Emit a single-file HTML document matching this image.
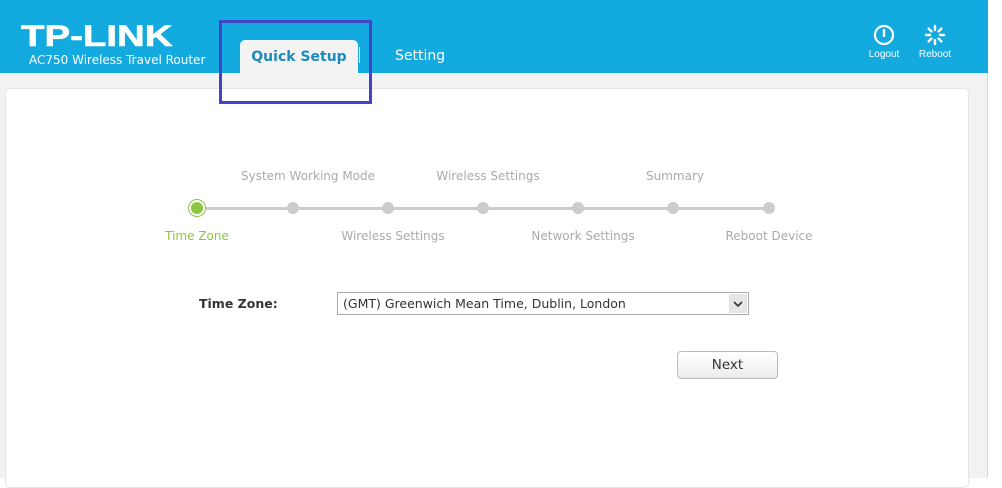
<!DOCTYPE html><html><head><style>
*{margin:0;padding:0;box-sizing:border-box}
body{width:1002px;height:478px;overflow:hidden;background:#fff;font-family:"DejaVu Sans",Verdana,sans-serif;position:relative}
.bg{position:absolute;left:0;top:0;width:988px;height:478px;background:#f2f2f2;border-right:1px solid #d8d8d8}
.hdr{position:absolute;left:0;top:0;width:988px;height:73px;background:#12aadf}
.logo{position:absolute;left:21px;top:21px;color:#fff;font-family:"Liberation Sans",Arial,sans-serif;font-weight:900;font-size:30px;transform:scaleX(1.28);transform-origin:left;line-height:32px;-webkit-text-stroke:0.6px #fff}
.sub{position:absolute;left:29px;top:53px;color:#fff;font-size:12px}
.tab{position:absolute;left:240px;top:40px;width:118px;height:33px;background:#f3f3f3;border-radius:5px 5px 0 0;color:#1a8bc0;font-weight:bold;font-size:14px;text-align:center;line-height:34px}
.sep{position:absolute;left:359px;top:47px;width:1px;height:16px;background:#fff}
.set{position:absolute;left:395px;top:48px;color:#fff;font-size:14px}
.hl{position:absolute;left:219px;top:20px;width:153px;height:84px;border:3px solid #4343c8}
.ic{position:absolute;color:#fff;font-family:"Liberation Sans",Arial,sans-serif;font-size:10px;text-align:center}
.panel{position:absolute;left:5px;top:88px;width:964px;height:400px;background:#fff;border-radius:5px;border:1px solid #e6e6e6}
.lbl{position:absolute;font-size:12px;color:#aaa;white-space:nowrap;transform:translateX(-50%)}
.line{position:absolute;left:197px;top:207px;width:572px;height:3px;background:#ccc}
.dot{position:absolute;top:202px;width:12px;height:12px;margin-left:-6px;border-radius:50%;background:#ccc}
.sel{position:absolute;left:337px;top:292px;width:412px;height:23px;border:1px solid #aaa;font-size:12.5px;color:#333;line-height:21px;padding-left:5px}
.arr{position:absolute;right:1px;top:1px;width:18px;height:19px;background:#e6e6e6}
.btn{position:absolute;left:677px;top:351px;width:101px;height:28px;border:1px solid #bbb;border-radius:4px;background:linear-gradient(#fff,#ececec);font-size:13.5px;color:#333;text-align:center;line-height:26px}
</style></head><body>
<div class="bg"></div>
<div class="hdr">
<div class="logo">TP-LINK</div>
<div class="sub">AC750 Wireless Travel Router</div>
<div class="tab">Quick Setup</div>
<div class="sep"></div>
<div class="set">Setting</div>
<div class="ic" style="left:866px;top:24px;width:36px">
<svg width="22" height="22" viewBox="0 0 22 22"><circle cx="11" cy="11" r="9" fill="none" stroke="#fff" stroke-width="2.2"/><line x1="11" y1="5" x2="11" y2="13" stroke="#fff" stroke-width="2.4"/></svg><div>Logout</div></div>
<div class="ic" style="left:915px;top:24px;width:40px">
<svg width="22" height="22" viewBox="0 0 22 22" stroke="#fff" stroke-width="2.4" stroke-linecap="round"><line x1="11" y1="2" x2="11" y2="6"/><line x1="11" y1="16" x2="11" y2="20"/><line x1="2" y1="11" x2="6" y2="11"/><line x1="16" y1="11" x2="20" y2="11"/><line x1="4.6" y1="4.6" x2="7.4" y2="7.4"/><line x1="14.6" y1="14.6" x2="17.4" y2="17.4"/><line x1="4.6" y1="17.4" x2="7.4" y2="14.6"/><line x1="14.6" y1="7.4" x2="17.4" y2="4.6"/></svg><div>Reboot</div></div>
</div>
<div class="panel"></div>
<div class="hl"></div>
<div class="line"></div>
<div class="dot" style="left:197px;background:#8cc63f;box-shadow:0 0 0 2px #fff,0 0 0 3px #8cc63f"></div>
<div class="dot" style="left:293px"></div><div class="dot" style="left:388px"></div><div class="dot" style="left:483px"></div><div class="dot" style="left:578px"></div><div class="dot" style="left:673px"></div><div class="dot" style="left:769px"></div>
<div class="lbl" style="left:308px;top:169px">System Working Mode</div>
<div class="lbl" style="left:488px;top:169px">Wireless Settings</div>
<div class="lbl" style="left:675px;top:169px">Summary</div>
<div class="lbl" style="left:197px;top:229px;color:#8cc63f">Time Zone</div>
<div class="lbl" style="left:393px;top:229px">Wireless Settings</div>
<div class="lbl" style="left:583px;top:229px">Network Settings</div>
<div class="lbl" style="left:769px;top:229px">Reboot Device</div>
<div style="position:absolute;left:199px;top:296px;font-size:12.5px;font-weight:bold;color:#333">Time Zone:</div>
<div class="sel">(GMT) Greenwich Mean Time, Dublin, London<div class="arr"><svg width="18" height="19" viewBox="0 0 18 19"><path d="M5 8l4 4 4-4" fill="none" stroke="#333" stroke-width="1.6"/></svg></div></div>
<div class="btn">Next</div>
</body></html>
